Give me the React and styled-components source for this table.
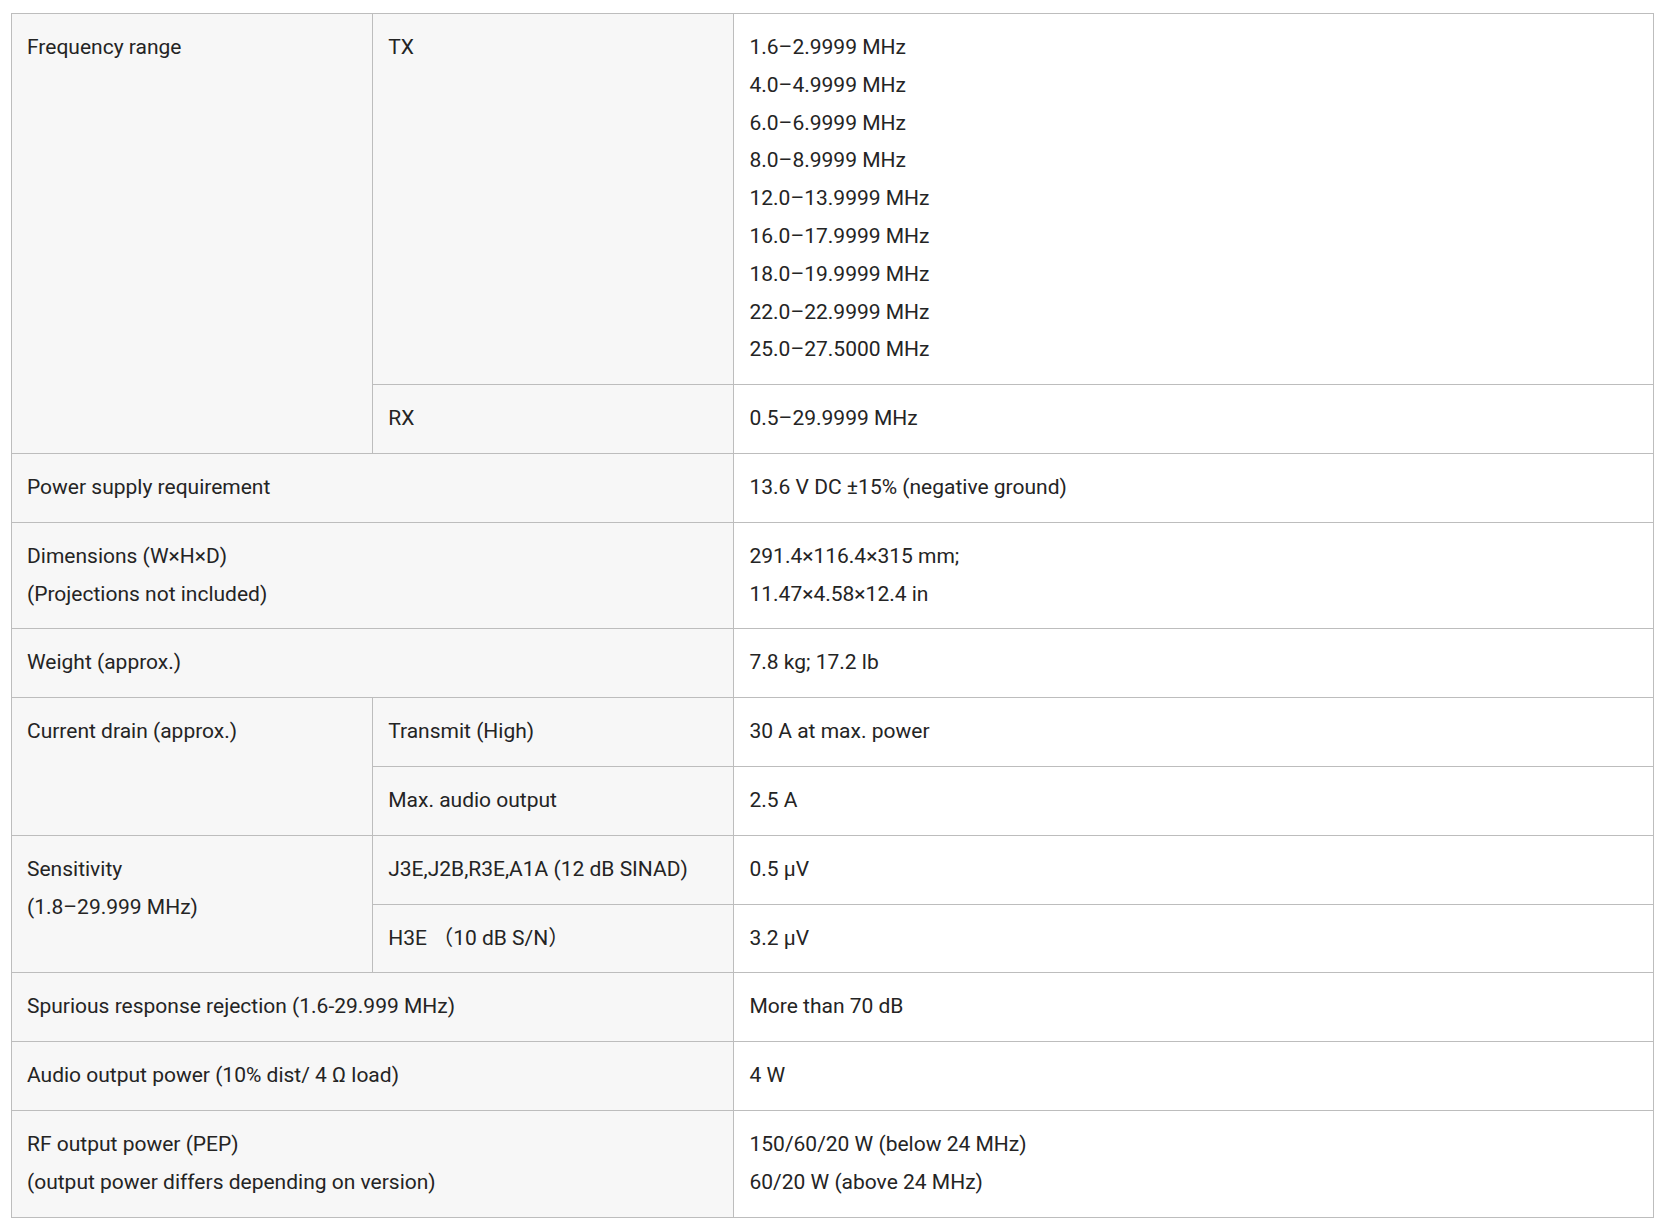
import React from 'react';
import styled, { createGlobalStyle } from 'styled-components';

const GlobalStyle = createGlobalStyle`
  body {
    margin: 0;
    background: #fff;
    font-family: Roboto, "Noto Sans CJK JP", sans-serif;
  }
`;

const Page = styled.div`
  padding: 13px 16px 14px 11px;
`;

const SpecTable = styled.table`
  width: 100%;
  border-collapse: collapse;
  table-layout: fixed;
  border: 1px solid #bdbdbd;
  font-size: 21px;
  line-height: 1.8;
  color: #242424;
`;

const Cell = styled.td`
  border: 1px solid #bdbdbd;
  padding: 15px 15px;
  vertical-align: top;
  text-align: left;
  background: ${p => (p.$label ? '#f7f7f7' : '#fff')};
`;

const Line = styled.div`
  white-space: nowrap;
`;

const Lines = ({ items }) => items.map((t, i) => <Line key={i}>{t}</Line>);

const txBands = [
  '1.6–2.9999 MHz',
  '4.0–4.9999 MHz',
  '6.0–6.9999 MHz',
  '8.0–8.9999 MHz',
  '12.0–13.9999 MHz',
  '16.0–17.9999 MHz',
  '18.0–19.9999 MHz',
  '22.0–22.9999 MHz',
  '25.0–27.5000 MHz',
];

export default function App() {
  return (
    <>
      <GlobalStyle />
      <Page>
        <SpecTable>
          <colgroup>
            <col style={{ width: '22%' }} />
            <col style={{ width: '22%' }} />
            <col style={{ width: '56%' }} />
          </colgroup>
          <tbody>
            <tr>
              <Cell $label rowSpan={2}>Frequency range</Cell>
              <Cell $label>TX</Cell>
              <Cell><Lines items={txBands} /></Cell>
            </tr>
            <tr>
              <Cell $label>RX</Cell>
              <Cell>0.5–29.9999 MHz</Cell>
            </tr>
            <tr>
              <Cell $label colSpan={2}>Power supply requirement</Cell>
              <Cell>13.6 V DC ±15% (negative ground)</Cell>
            </tr>
            <tr>
              <Cell $label colSpan={2}>
                <Lines items={['Dimensions (W×H×D)', '(Projections not included)']} />
              </Cell>
              <Cell>
                <Lines items={['291.4×116.4×315 mm;', '11.47×4.58×12.4 in']} />
              </Cell>
            </tr>
            <tr>
              <Cell $label colSpan={2}>Weight (approx.)</Cell>
              <Cell>7.8 kg; 17.2 lb</Cell>
            </tr>
            <tr>
              <Cell $label rowSpan={2}>Current drain (approx.)</Cell>
              <Cell $label>Transmit (High)</Cell>
              <Cell>30 A at max. power</Cell>
            </tr>
            <tr>
              <Cell $label>Max. audio output</Cell>
              <Cell>2.5 A</Cell>
            </tr>
            <tr>
              <Cell $label rowSpan={2}>
                <Lines items={['Sensitivity', '(1.8–29.999 MHz)']} />
              </Cell>
              <Cell $label>J3E,J2B,R3E,A1A (12 dB SINAD)</Cell>
              <Cell>0.5 μV</Cell>
            </tr>
            <tr>
              <Cell $label>H3E （10 dB S/N）</Cell>
              <Cell>3.2 μV</Cell>
            </tr>
            <tr>
              <Cell $label colSpan={2}>Spurious response rejection (1.6-29.999 MHz)</Cell>
              <Cell>More than 70 dB</Cell>
            </tr>
            <tr>
              <Cell $label colSpan={2}>Audio output power (10% dist/ 4 Ω load)</Cell>
              <Cell>4 W</Cell>
            </tr>
            <tr>
              <Cell $label colSpan={2}>
                <Lines items={['RF output power (PEP)', '(output power differs depending on version)']} />
              </Cell>
              <Cell>
                <Lines items={['150/60/20 W (below 24 MHz)', '60/20 W (above 24 MHz)']} />
              </Cell>
            </tr>
          </tbody>
        </SpecTable>
      </Page>
    </>
  );
}
